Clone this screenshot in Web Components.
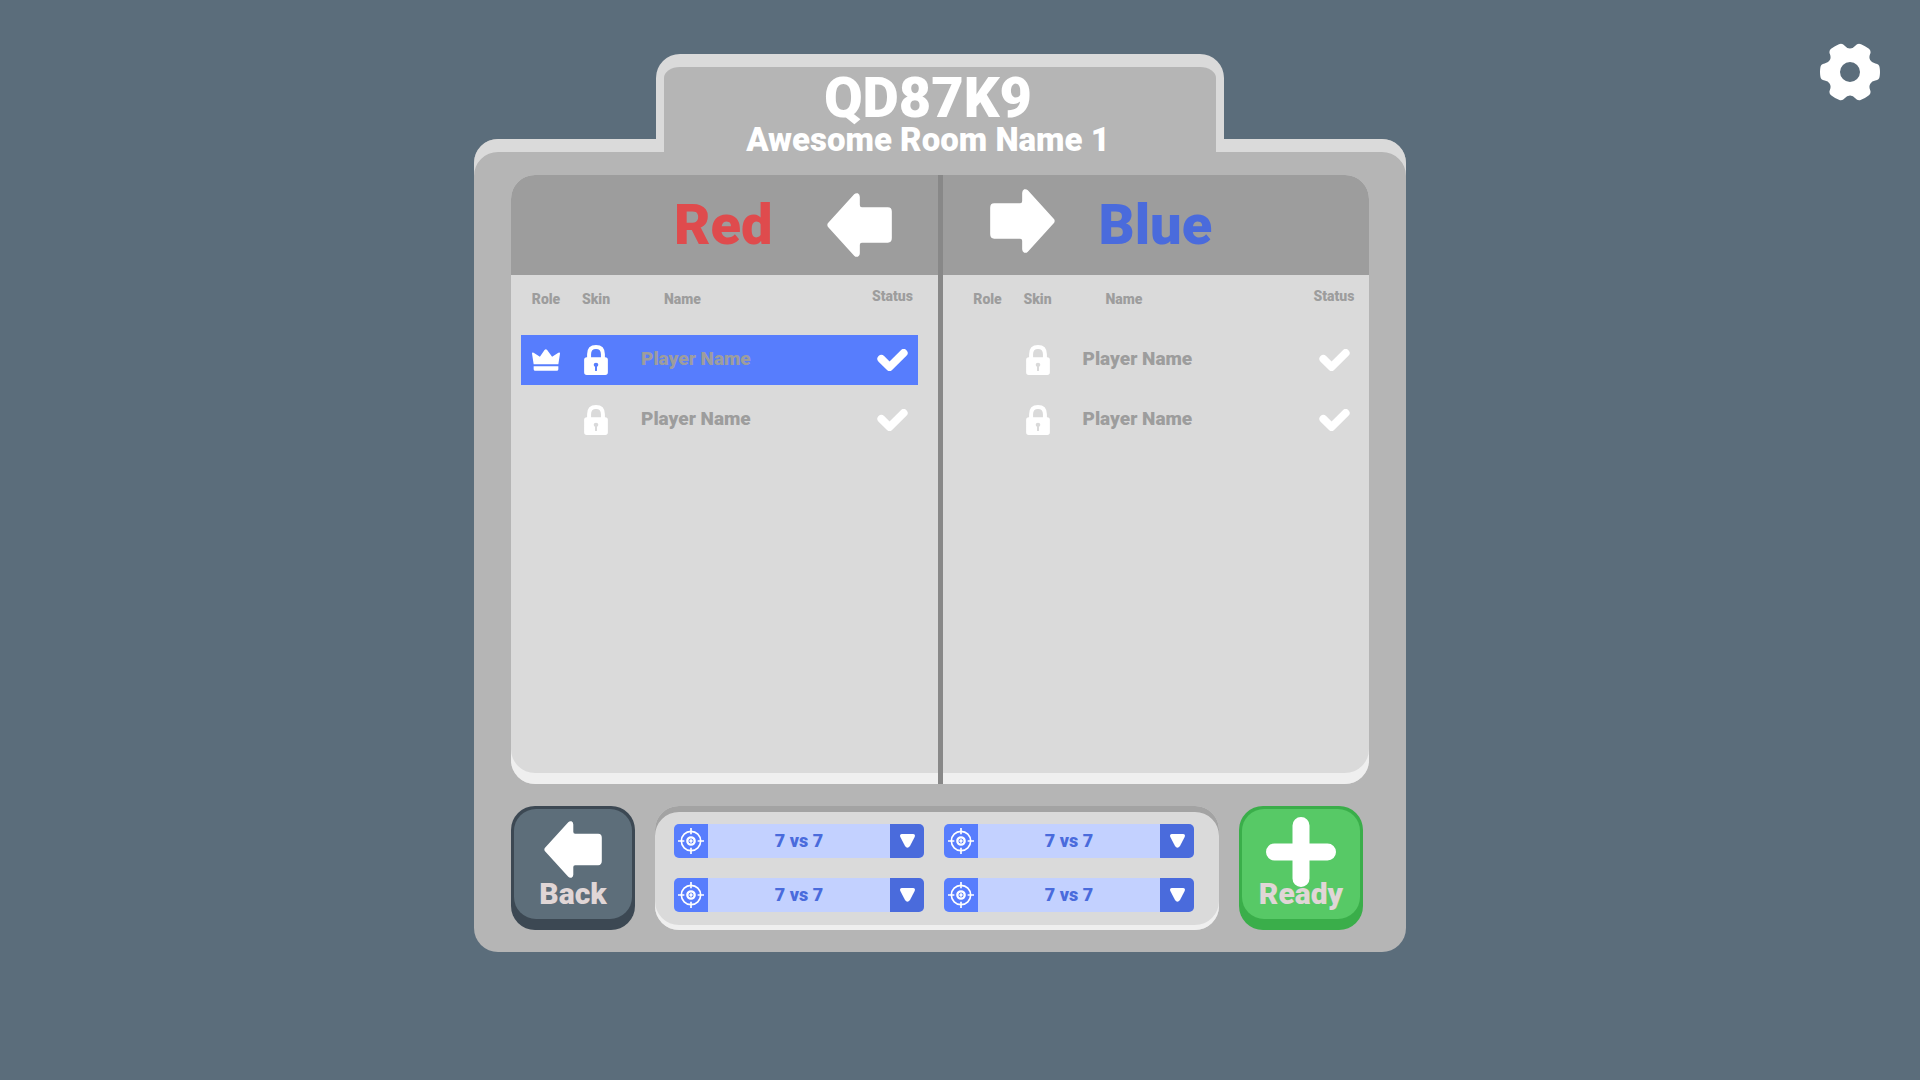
<!DOCTYPE html>
<html lang="en">
<head>
<meta charset="utf-8">
<title>Room lobby</title>
<style>
  html { --bg: #5b6d7b; --panel: #b5b5b5; --light: #dadada; --pale: #efefef; --muted: #9d9d9d; --blue: #577dfd; --royal: #4a6bdc; }
  body { margin: 0; background: var(--bg); font-family: Roboto, "Noto Sans", sans-serif; font-weight: 900; color: #fff; }
</style>
</head>
<body>
<game-lobby>
  <room-tab slot="tab" code="QD87K9" name="Awesome Room Name 1"></room-tab>
  <team-board slot="board">
    <team-panel class="red" team="Red">
      <player-entry name="Player Name" host selected></player-entry>
      <player-entry name="Player Name"></player-entry>
    </team-panel>
    <team-panel class="blue" team="Blue">
      <player-entry name="Player Name"></player-entry>
      <player-entry name="Player Name"></player-entry>
    </team-panel>
  </team-board>
  <big-button slot="actions" kind="back" label="Back"></big-button>
  <match-options slot="actions">
    <mode-select label="Team size" value="7 vs 7"></mode-select>
    <mode-select label="Mode" value="7 vs 7"></mode-select>
    <mode-select label="Map" value="7 vs 7"></mode-select>
    <mode-select label="Rules" value="7 vs 7"></mode-select>
  </match-options>
  <big-button slot="actions" kind="ready" label="Ready"></big-button>
  <settings-button slot="corner"></settings-button>
</game-lobby>

<script>
const ARROW = 'M2 91 L81 4 Q86 -1 92 1 Q98 4 98 12 V36 Q98 43 104 43 H182 Q194 43 194 56 V135 Q194 149 182 149 H104 Q98 149 98 155 V181 Q98 188 92 191 Q86 193 81 188 L2 101 Q-1 96 2 91Z';
const icons = {
  arrow: `<svg viewBox="0 0 194 192" aria-hidden="true"><path fill="#fff" d="${ARROW}"/></svg>`,
  plus: '<svg viewBox="0 0 70 76" aria-hidden="true"><path d="M35 14.500V67.500M8.500 41H61.500" fill="none" stroke="#fff" stroke-width="17" stroke-linecap="round"/></svg>',
  crown: '<svg width="28" height="22" viewBox="0 0 85 66" role="img" aria-label="Host"><path fill="#fff" d="M5 46L0 13Q0 8 5 11L24 23L38 3Q42 -2 46 3L61 23L80 11Q85 8 85 13L80 46ZM5 52H80V61Q80 66 75 66H10Q5 66 5 61Z"/></svg>',
  lock: '<svg width="24" height="30" viewBox="0 0 72 91" role="img" aria-label="Locked"><path fill="none" stroke="#fff" stroke-width="12" d="M15 42V28Q15 6 36 6T57 28V42"/><path fill="#fff" fill-rule="evenodd" d="M8 37H64Q72 37 72 45V83Q72 91 64 91H8Q0 91 0 83V45Q0 37 8 37ZM33 66V77Q33 79 36 79T39 77V66Q43 64 43 60Q43 54 36 54T29 60Q29 64 33 66Z"/></svg>',
  check: '<svg width="31" height="22" viewBox="0 0 92 67" role="img" aria-label="Ready"><path fill="none" stroke="#fff" stroke-width="24" stroke-linecap="round" stroke-linejoin="round" d="M12 30L37 55L80 12"/></svg>',
  target: '<svg width="26" height="26" viewBox="0 0 78 78" aria-hidden="true"><g fill="none" stroke="#fff" stroke-width="5"><circle cx="39" cy="39" r="29"/><circle cx="39" cy="39" r="11" stroke-width="7"/><path d="M39 0V19M39 59V78M0 39H19M59 39H78M39 34V44M34 39H44"/></g></svg>',
  caret: '<svg width="15" height="14" viewBox="0 0 45 42" aria-hidden="true"><path fill="#fff" d="M5 0H40Q47 1 44 9L30 36Q22 46 15 36L1 9Q-2 1 5 0Z"/></svg>'
};

/* Repeats one rounded tooth six times round the centre. */
function gearPath() {
  const quads = [[65.5,-27,76,-25.5],[88,-24,89,-13],[91,0,89,13],[88,24,76,25.5],[65.5,27,61,35]];
  let d = '';
  for (let k = 0; k < 6; k++) {
    const a = k * Math.PI / 3;
    const p = (x, y) => (x * Math.cos(a) - y * Math.sin(a)).toFixed(1) + ' ' + (x * Math.sin(a) + y * Math.cos(a)).toFixed(1);
    if (!k) d += 'M' + p(61, -35);
    for (const q of quads) d += 'Q' + p(q[0], q[1]) + ' ' + p(q[2], q[3]);
  }
  return d + 'ZM30 0A30 30 0 1 0 -30 0A30 30 0 1 0 30 0Z';
}

class Base extends HTMLElement {
  connectedCallback() {
    if (this.shadowRoot) return;
    this.attachShadow({ mode: 'open' }).innerHTML =
      `<style>*{box-sizing:border-box} svg{display:block} button,select{font:inherit;color:inherit;border:0;margin:0;padding:0;background:none;cursor:pointer} ${this.css()}</style>${this.html()}`;
  }
  css() { return ''; }
  html() { return '<slot></slot>'; }
}

customElements.define('game-lobby', class extends Base {
  css() { return `
    :host { display: grid; grid-template-columns: 1fr minmax(auto, 932px) 1fr; padding: 0 40px 0 0; box-sizing: border-box; min-height: 100vh; align-items: start; }
    main { grid-column: 2; padding-top: 54px; display: flex; flex-direction: column; }
    .panel { background: var(--panel); border-radius: 24px; box-shadow: inset 0 13px 0 var(--light); padding: 36px 37px 22px; display: flex; flex-direction: column; gap: 22px; }
    .actions { display: flex; gap: 20px; padding-right: 6px; }
    aside { justify-self: end; padding-top: 43px; }`; }
  html() { return `<main><slot name="tab"></slot><section class="panel"><slot name="board"></slot><div class="actions"><slot name="actions"></slot></div></section></main><aside><slot name="corner"></slot></aside>`; }
});

customElements.define('room-tab', class extends Base {
  css() { return `
    :host { display: block; box-sizing: border-box; align-self: center; width: 61%; margin-bottom: -13px; position: relative; background: var(--panel); border: 8px solid var(--light); border-top-width: 13px; border-bottom: 0; border-radius: 24px 24px 0 0; padding: 2px 24px 0 0; text-align: center; }
    h1 { margin: 0; font-size: 56px; line-height: 58px; font-weight: inherit; }
    p { margin: 0; font-size: 33px; line-height: 25px; }`; }
  html() { return `<h1>${this.getAttribute('code')}</h1><p>${this.getAttribute('name')}</p>`; }
});

customElements.define('team-board', class extends Base {
  css() { return `
    :host { display: flex; height: 609px; border-radius: 24px; overflow: hidden; background: var(--light); box-shadow: inset 0 -11px 0 var(--pale); }
    ::slotted(team-panel) { flex: 1; }
    ::slotted(.blue) { border-left: 5px solid #888; }`; }
});

customElements.define('player-entry', class extends Base {
  css() { return ':host { display: none; }'; }
  html() { return ''; }
});

customElements.define('team-panel', class extends Base {
  css() { return `
    :host { display: block; }
    header { height: 100px; background: var(--muted); display: flex; align-items: center; }
    h2 { margin: 0; font-size: 56px; line-height: 64px; font-weight: inherit; }
    header button svg { width: 65px; height: 64px; }
    :host(.red) header { justify-content: flex-end; gap: 54px; padding-right: 46px; }
    :host(.red) h2 { color: #df4b4d; }
    :host(.blue) header { flex-direction: row-reverse; justify-content: flex-end; gap: 44px; padding-left: 47px; }
    :host(.blue) h2 { color: var(--royal); }
    :host(.blue) header button { padding-bottom: 8px; }
    :host(.blue) header button svg { transform: scaleX(-1); }
    .list { padding: 0 20px 0 10px; }
    :host(.blue) .list { padding: 0 10px 0 20px; }
    table { width: 100%; border-collapse: separate; border-spacing: 0 10px; table-layout: fixed; color: var(--muted); }
    th, td { padding: 0; }
    th { height: 40px; vertical-align: top; font-size: 14px; line-height: 28px; font-weight: inherit; }
    th:nth-child(3) { text-align: left; padding-left: 43px; }
    th:nth-child(4) { line-height: 22px; }
    .icon { width: 50px; }
    td { height: 50px; font-size: 19px; line-height: 24px; }
    td:nth-child(3) { padding: 0 0 2px 20px; }
    td svg { margin: 0 auto; }
    .selected td { background: var(--blue); }`; }
  html() {
    const team = this.getAttribute('team');
    const rows = [...this.querySelectorAll('player-entry')].map(p =>
      `<tr class="${p.hasAttribute('selected') ? 'selected' : ''}"><td>${p.hasAttribute('host') ? icons.crown : ''}</td><td>${icons.lock}</td><td>${p.getAttribute('name')}</td><td>${icons.check}</td></tr>`).join('');
    return `<header><h2>${team}</h2><button type="button" aria-label="Join ${team}">${icons.arrow}</button></header>
      <div class="list"><table><thead><tr><th class="icon">Role</th><th class="icon">Skin</th><th>Name</th><th class="icon">Status</th></tr></thead><tbody>${rows}</tbody></table></div>`;
  }
});

customElements.define('big-button', class extends Base {
  css() { return `
    :host { display: block; flex: none; --face: #5d6e7a; --edge: #3c4853; }
    :host([kind=ready]) { --face: #57c966; --edge: #3aae4a; }
    button { width: 124px; height: 124px; padding: 3px 3px 11px; border-radius: 24px; background: var(--edge); display: flex; }
    .face { flex: 1; align-self: stretch; border-radius: 22px; background: var(--face); display: flex; flex-direction: column; align-items: center; }
    .icon { height: 80px; display: flex; align-items: center; }
    .icon svg { width: 58px; height: 57px; }
    :host([kind=ready]) .icon svg { width: 70px; height: 76px; }
    .label { margin-top: -10px; font-size: 30px; line-height: 30px; color: #e0d6d6; position: relative; }`; }
  html() { return `<button type="button"><span class="face"><span class="icon">${this.getAttribute('kind') === 'back' ? icons.arrow : icons.plus}</span><span class="label">${this.getAttribute('label')}</span></span></button>`; }
});

customElements.define('match-options', class extends Base {
  css() { return `
    :host { flex: 1; box-sizing: border-box; display: grid; grid-template-columns: 1fr 1fr; gap: 20px; align-content: start; padding: 18px 25px 18px 19px; border-radius: 24px; background: var(--light); box-shadow: inset 0 6px 0 #a3a3a3, inset 0 -5px 0 var(--pale); }`; }
});

customElements.define('mode-select', class extends Base {
  css() { return `
    :host { display: grid; grid-template-columns: 34px 1fr 34px; height: 34px; border-radius: 5px; overflow: hidden; background: #c3d1ff; }
    span { display: grid; place-items: center; background: var(--blue); }
    .caret { background: var(--royal); }
    select { appearance: none; width: 100%; height: 34px; font-size: 18px; line-height: 34px; color: var(--royal); text-align: center; text-align-last: center; border-radius: 0; }`; }
  html() { return `<span>${icons.target}</span><select aria-label="${this.getAttribute('label')}"><option>${this.getAttribute('value')}</option></select><span class="caret">${icons.caret}</span>`; }
});

customElements.define('settings-button', class extends Base {
  css() { return ':host { display: block; } button { display: block; }'; }
  html() { return `<button type="button" aria-label="Settings"><svg width="60" height="58" viewBox="-90 -87 180 174" aria-hidden="true"><path fill="#fff" fill-rule="evenodd" d="${gearPath()}"/></svg></button>`; }
});
</script>
</body>
</html>
